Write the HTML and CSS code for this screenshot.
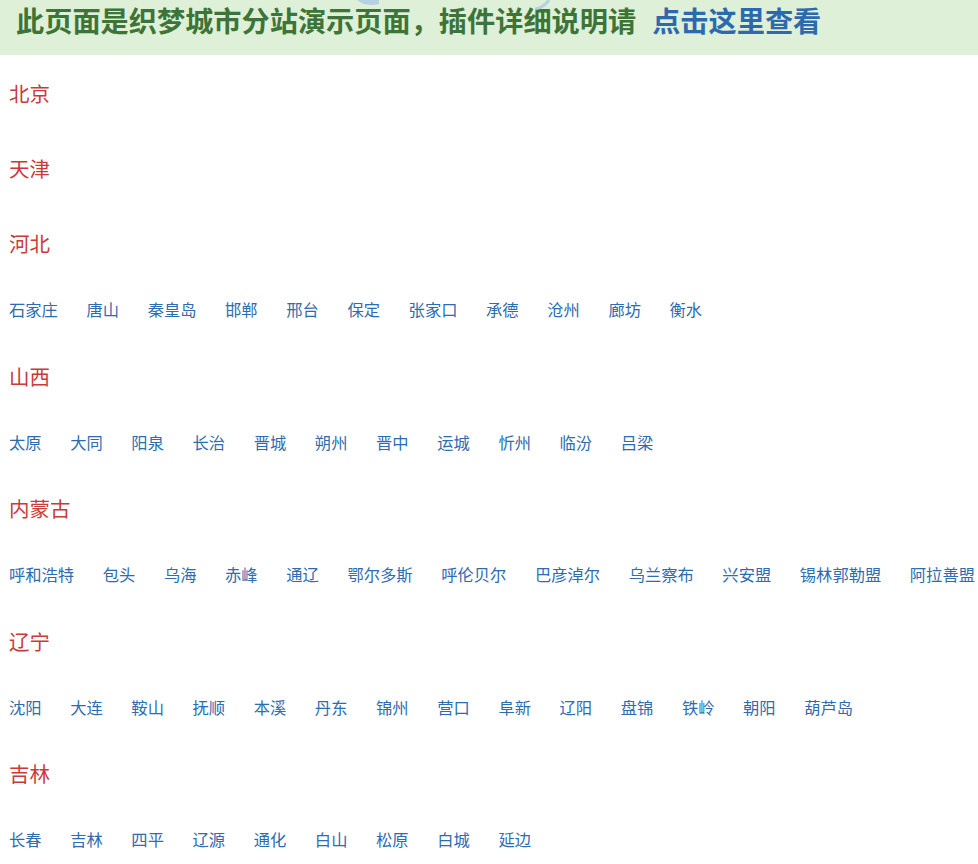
FILE: index.html
```html
<!DOCTYPE html>
<html lang="zh-CN">
<head>
<meta charset="utf-8">
<title>城市分站</title>
<link rel="stylesheet" href="styles.css">
</head>
<body>
<div class="notice">
  <svg class="watermark" width="220" height="12" viewBox="0 0 220 12" aria-hidden="true">
    <path d="M0 0 Q8 7 22 4 L22 0 Z" fill="#a9cbe3" opacity="0.8"/>
    <path d="M178 9 Q186 8 192 0" stroke="#a9cbe3" stroke-width="3" fill="none" opacity="0.8"/>
  </svg>
  <span class="notice-text">此页面是织梦城市分站演示页面，插件详细说明请</span><a class="notice-link" href="#">点击这里查看</a>
</div>
<div class="list">
  <div class="prov">北京</div>
  <div class="prov">天津</div>
  <div class="prov">河北</div>
  <div class="cities"><a href="#">石家庄</a><a href="#">唐山</a><a href="#">秦皇岛</a><a href="#">邯郸</a><a href="#">邢台</a><a href="#">保定</a><a href="#">张家口</a><a href="#">承德</a><a href="#">沧州</a><a href="#">廊坊</a><a href="#">衡水</a></div>
  <div class="prov">山西</div>
  <div class="cities"><a href="#">太原</a><a href="#">大同</a><a href="#">阳泉</a><a href="#">长治</a><a href="#">晋城</a><a href="#">朔州</a><a href="#">晋中</a><a href="#">运城</a><a href="#">忻州</a><a href="#">临汾</a><a href="#">吕梁</a></div>
  <div class="prov">内蒙古</div>
  <div class="cities"><a href="#">呼和浩特</a><a href="#">包头</a><a href="#">乌海</a><a href="#">赤峰</a><a href="#">通辽</a><a href="#">鄂尔多斯</a><a href="#">呼伦贝尔</a><a href="#">巴彦淖尔</a><a href="#">乌兰察布</a><a href="#">兴安盟</a><a href="#">锡林郭勒盟</a><a href="#">阿拉善盟</a></div>
  <div class="prov">辽宁</div>
  <div class="cities"><a href="#">沈阳</a><a href="#">大连</a><a href="#">鞍山</a><a href="#">抚顺</a><a href="#">本溪</a><a href="#">丹东</a><a href="#">锦州</a><a href="#">营口</a><a href="#">阜新</a><a href="#">辽阳</a><a href="#">盘锦</a><a href="#">铁岭</a><a href="#">朝阳</a><a href="#">葫芦岛</a></div>
  <div class="prov">吉林</div>
  <div class="cities"><a href="#">长春</a><a href="#">吉林</a><a href="#">四平</a><a href="#">辽源</a><a href="#">通化</a><a href="#">白山</a><a href="#">松原</a><a href="#">白城</a><a href="#">延边</a></div>
</div>
</body>
</html>
```
FILE: styles.css
```css
html, body {
  margin: 0;
  padding: 0;
  background: #ffffff;
  font-family: "Noto Sans CJK SC", "Noto Sans", sans-serif;
  overflow: hidden;
}
.notice {
  position: relative;
  height: 55px;
  background: #dff0d8;
  padding-left: 16px;
  box-sizing: border-box;
  line-height: 40px;
  font-size: 28.2px;
  font-weight: 700;
  white-space: nowrap;
}
.watermark {
  position: absolute;
  left: 357px;
  top: 0;
}
.notice-text {
  color: #3d7437;
}
.notice-link {
  color: #2c6aad;
  text-decoration: none;
  margin-left: 16px;
}
.list {
  display: flex;
  flex-direction: column;
  gap: 38.3px;
  padding: 20px 0 0 9px;
}
.prov {
  color: #c93a3b;
  font-size: 20.5px;
  line-height: 36.7px;
}
.cities {
  display: flex;
  gap: 28.6px;
  font-size: 16.3px;
  line-height: 19.3px;
  white-space: nowrap;
}
.cities a {
  color: #2e6cb0;
  text-decoration: none;
}
```
